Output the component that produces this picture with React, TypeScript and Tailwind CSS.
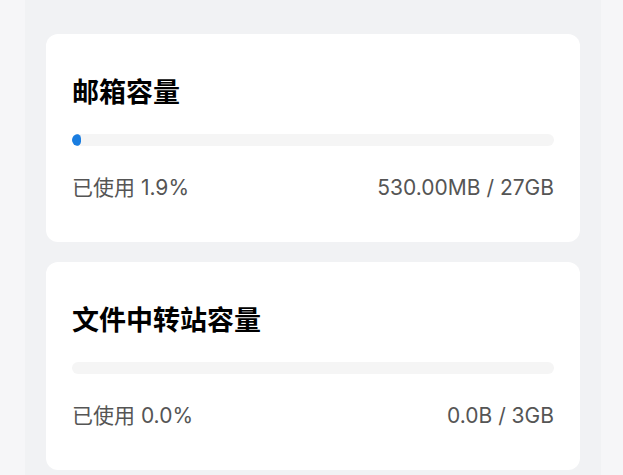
const cards = [
  { title: "邮箱容量", percent: 1.9, used: "已使用 1.9%", total: "530.00MB / 27GB" },
  { title: "文件中转站容量", percent: 0, used: "已使用 0.0%", total: "0.0B / 3GB" },
];

const UsageCard = ({ title, percent, used, total }: (typeof cards)[number]) => {
  return (
    <div className="bg-white rounded-[12px] px-[26px] pt-[39px] pb-[39px]">
      <h2 className="text-[27px] leading-[38px] font-bold text-black">{title}</h2>
      <div className="mt-[23px] h-[12px] rounded-full bg-[#f5f5f5] overflow-hidden">
        <div className="h-full rounded-full bg-[#1a7de0]" style={{ width: `${percent}%` }} />
      </div>
      <div
        className="mt-[27px] flex justify-between text-[21px] leading-[30px] text-[#555555]"
        style={{ fontFamily: 'Inter, "Noto Sans CJK SC", sans-serif' }}
      >
        <span>{used}</span>
        <span>{total}</span>
      </div>
    </div>
  );
};

export default function App() {
  return (
    <div
      className="min-h-screen w-full bg-[#f6f6f8] pl-[25px] overflow-hidden"
      style={{ fontFamily: '"Noto Sans", "Noto Sans CJK SC", sans-serif' }}
    >
      <div className="w-[576px] min-h-screen bg-[#f1f2f4] px-[21px] pt-[34px] flex flex-col gap-[20px]">
        {cards.map((c) => (
          <UsageCard key={c.title} {...c} />
        ))}
      </div>
    </div>
  );
}
